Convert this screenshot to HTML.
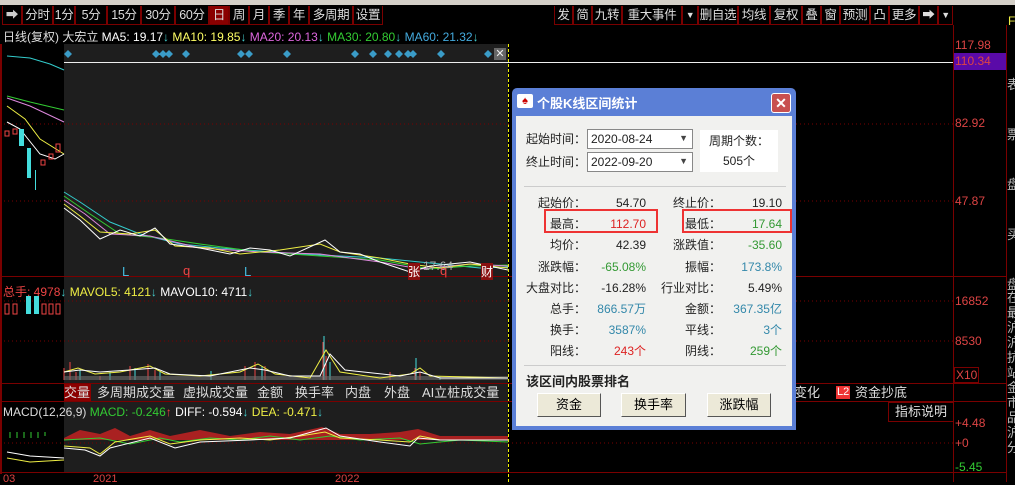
<!DOCTYPE html>
<html><head><meta charset="utf-8"><style>
*{margin:0;padding:0;box-sizing:border-box}
body{width:1015px;height:482px;background:#000;position:relative;overflow:hidden;font-family:"Liberation Sans","Noto Sans CJK SC",sans-serif;font-size:12px;color:#ccc}
.a{position:absolute;white-space:nowrap}
.tb{position:absolute;top:6px;height:19px;border:1px solid #7a0000;border-top:none;color:#ddd;font-size:12.5px;line-height:18px;text-align:center;white-space:nowrap;overflow:hidden;letter-spacing:-0.3px}
.lbl{position:absolute;color:#d44;font-size:12px}
.dlg{position:absolute;left:512px;top:88px;width:284px;height:342px;background:#5b7fd6;border-radius:5px 5px 0 0}
.body{position:absolute;left:4px;top:28px;width:276px;height:310px;background:#f1f1ef}
.d{position:absolute;color:#222;font-size:12px;white-space:nowrap}
.r{text-align:right}
.btn{position:absolute;top:305px;height:24px;background:#ece9d8;border:1px solid #fff;border-right-color:#555;border-bottom-color:#555;font-size:13px;text-align:center;line-height:22px;color:#000}
</style></head><body>
<div class="a" style="left:0;top:0;width:1015px;height:5px;background:#d4d0c8"></div>
<!-- toolbar -->
<div class="tb" style="left:2px;width:20px;color:#ccc">➡</div>
<div class="tb" style="left:22px;width:31px">分时</div>
<div class="tb" style="left:53px;width:22px">1分</div>
<div class="tb" style="left:75px;width:32px">5分</div>
<div class="tb" style="left:107px;width:34px">15分</div>
<div class="tb" style="left:141px;width:34px">30分</div>
<div class="tb" style="left:175px;width:34px">60分</div>
<div class="tb" style="left:209px;width:20px;background:#8a0000">日</div>
<div class="tb" style="left:229px;width:20px">周</div>
<div class="tb" style="left:249px;width:20px">月</div>
<div class="tb" style="left:269px;width:20px">季</div>
<div class="tb" style="left:289px;width:20px">年</div>
<div class="tb" style="left:309px;width:44px">多周期</div>
<div class="tb" style="left:353px;width:30px">设置</div>
<div class="tb" style="left:554px;width:19px">发</div>
<div class="tb" style="left:573px;width:19px">简</div>
<div class="tb" style="left:592px;width:30px">九转</div>
<div class="tb" style="left:622px;width:60px">重大事件</div>
<div class="tb" style="left:682px;width:16px;font-size:9px">▼</div>
<div class="tb" style="left:698px;width:40px">删自选</div>
<div class="tb" style="left:738px;width:32px">均线</div>
<div class="tb" style="left:770px;width:32px">复权</div>
<div class="tb" style="left:802px;width:19px">叠</div>
<div class="tb" style="left:821px;width:19px">窗</div>
<div class="tb" style="left:840px;width:30px">预测</div>
<div class="tb" style="left:870px;width:19px">凸</div>
<div class="tb" style="left:889px;width:30px">更多</div>
<div class="tb" style="left:919px;width:19px">➡</div>
<div class="tb" style="left:938px;width:15px;font-size:9px">▼</div>
<!-- info row -->
<div class="a" style="left:3px;top:28px;font-size:12px;color:#ddd">日线(复权) 大宏立 <span style="color:#fff">MA5: 19.17</span><span style="color:#4cc;font-weight:bold">↓</span> <span style="color:#ff6">MA10: 19.85</span><span style="color:#4cc;font-weight:bold">↓</span> <span style="color:#d6d">MA20: 20.13</span><span style="color:#4cc;font-weight:bold">↓</span> <span style="color:#3c3">MA30: 20.80</span><span style="color:#4cc;font-weight:bold">↓</span> <span style="color:#4ad">MA60: 21.32</span><span style="color:#4cc;font-weight:bold">↓</span></div>
<!-- chart frame -->
<div class="a" style="left:0;top:44px;width:3px;height:430px;border-left:2px solid #7a0000"></div>
<div class="a" style="left:64px;top:44px;width:444px;height:428px;background:#1e1e1e"></div>
<div class="a" style="left:508px;top:44px;height:438px;border-left:1px dashed #ee0"></div>
<div class="a" style="left:953px;top:25px;width:1px;height:457px;background:#7a0000"></div>
<div class="a" style="left:1006px;top:25px;width:1px;height:457px;background:#7a0000"></div>
<div class="a" style="left:64px;top:62px;width:889px;height:1px;background:#eee"></div>
<div class="a" style="left:0;top:276px;width:1006px;height:1px;background:#7a0000"></div>
<div class="a" style="left:0;top:383px;width:1006px;height:1px;background:#7a0000"></div>
<div class="a" style="left:0;top:401px;width:1006px;height:1px;background:#7a0000"></div>
<div class="a" style="left:0;top:472px;width:1006px;height:1px;background:#7a0000"></div>
<div class="a" style="left:494px;top:48px;width:12px;height:12px;background:#666;color:#eee;font-size:11px;line-height:12px;text-align:center">✕</div>
<svg class="a" style="left:0;top:44px" width="953" height="430">
<g fill="#3a9cc8">
<path d="M68 6l4 4-4 4-4-4z M156 6l4 4-4 4-4-4z M163 6l4 4-4 4-4-4z M169 6l4 4-4 4-4-4z M186 6l4 4-4 4-4-4z M241 6l4 4-4 4-4-4z M249 6l4 4-4 4-4-4z M287 6l4 4-4 4-4-4z M355 6l4 4-4 4-4-4z M373 6l4 4-4 4-4-4z M388 6l4 4-4 4-4-4z M399 6l4 4-4 4-4-4z M408 6l4 4-4 4-4-4z M413 6l4 4-4 4-4-4z M441 6l4 4-4 4-4-4z M488 6l4 4-4 4-4-4z"/>
</g>
<g stroke="#7a0000" stroke-dasharray="1,3"><line x1="0" y1="80" x2="953" y2="80"/><line x1="0" y1="157" x2="953" y2="157"/><line x1="0" y1="257" x2="953" y2="257"/><line x1="0" y1="297" x2="953" y2="297"/><line x1="0" y1="399" x2="953" y2="399"/></g>
<g fill="none" stroke-width="1">
<polyline stroke="#3cc" points="7,12 30,14 50,20 64,26"/>
<polyline stroke="#3c3" points="7,52 30,58 64,66"/>
<polyline stroke="#d8d" points="7,54 30,62 64,78"/>
<polyline stroke="#ee4" points="7,62 25,75 40,95 64,110"/>
<polyline stroke="#fff" points="7,78 20,85 40,110 55,115 64,110"/>
<polyline stroke="#3cc" points="64,148 80,158 110,178 140,190 180,200 220,204 300,210 380,214 440,220 480,224 508,223"/>
<polyline stroke="#3c3" points="64,152 90,170 120,190 160,194 200,200 260,208 320,212 380,216 430,225 470,222 508,221"/>
<polyline stroke="#d8d" points="64,156 85,170 110,190 150,192 200,204 260,208 320,210 380,218 420,225 470,220 508,222"/>
<polyline stroke="#ee4" points="64,160 80,172 100,188 130,190 155,186 175,202 210,204 240,210 280,206 320,200 340,208 380,214 410,220 440,224 470,220 508,224"/>
<polyline stroke="#fff" points="64,164 80,176 100,195 120,186 140,192 155,184 170,200 200,204 230,210 250,204 270,206 290,212 325,196 340,208 360,210 380,218 410,228 430,222 470,218 508,226"/>
</g>
<g fill="#4dd"><rect x="19" y="85" width="5" height="17"/><rect x="27" y="104" width="4" height="30"/><rect x="35" y="126" width="1" height="20"/></g>
<g fill="none" stroke="#e44"><rect x="5" y="87" width="4" height="5"/><rect x="13" y="85" width="4" height="5"/><rect x="41" y="116" width="4" height="5"/><rect x="49" y="110" width="4" height="5"/><rect x="56" y="100" width="4" height="8"/></g>
</svg>
<div class="a" style="left:122px;top:264px;color:#4bd;font-size:13px">L</div>
<div class="a" style="left:183px;top:263px;color:#e44;font-size:13px">q</div>
<div class="a" style="left:244px;top:264px;color:#4bd;font-size:13px">L</div>
<div class="a" style="left:408px;top:263px;color:#fff;background:#8a1010;font-size:12px">张</div>
<div class="a" style="left:423px;top:259px;color:#aaa;font-size:12px">17.64</div>
<div class="a" style="left:440px;top:263px;color:#e44;font-size:13px">q</div>
<div class="a" style="left:481px;top:263px;color:#fff;background:#8a1010;font-size:12px">财</div>
<!-- volume -->
<div class="a" style="left:3px;top:283px;font-size:12px"><span style="color:#e44">总手: 4978</span><span style="color:#4cc;font-weight:bold">↓</span> <span style="color:#ee4">MAVOL5: 4121</span><span style="color:#4cc;font-weight:bold">↓</span> <span style="color:#fff">MAVOL10: 4711</span><span style="color:#4cc;font-weight:bold">↓</span></div>
<svg class="a" style="left:0;top:292px" width="508" height="91">
<g fill="#4dd"><rect x="26" y="4" width="5" height="18"/><rect x="34" y="4" width="5" height="18"/></g>
<g fill="none" stroke="#e44"><rect x="5" y="12" width="4" height="10"/><rect x="13" y="12" width="4" height="10"/><rect x="42" y="12" width="4" height="10"/><rect x="49" y="12" width="4" height="10"/><rect x="56" y="12" width="4" height="10"/></g>
<path d="M64 88 V76 M70 88V70 M76 88V80 M100 88V84 M130 88V74 M148 88V72 M155 88V78 M245 88V74 M255 88V70 M265 88V74 M323 88V50 M326 88V64 M390 88V80 M415 88V76 M420 88V80" stroke="#e44"/>
<path d="M80 88V78 M110 88V80 M135 88V76 M160 88V80 M211 88V79 M262 88V74 M324 88V44 M330 88V70 M416 88V66 M440 88V84" stroke="#4dd"/>
<rect x="64" y="84" width="444" height="4" fill="#6a6a6a" opacity=".6"/>
<polyline fill="none" stroke="#ee4" points="64,80 78,76 95,82 120,80 150,74 165,82 200,84 240,80 258,72 275,82 310,86 326,58 340,80 380,86 410,82 420,76 430,84 508,86"/>
<polyline fill="none" stroke="#fff" points="64,80 80,78 100,80 130,78 155,76 170,82 210,84 250,76 265,78 290,84 320,84 330,62 345,78 400,84 420,80 440,86 508,86"/>
</svg>
<!-- tabs -->
<div class="a" style="left:0;top:384px;width:1006px;height:17px;font-size:13px;color:#ddd;line-height:17px">
<span class="a" style="left:64px;width:27px;background:#8a0000;height:17px">交量</span>
<span class="a" style="left:97px">多周期成交量</span>
<span class="a" style="left:183px">虚拟成交量</span>
<span class="a" style="left:257px">金额</span>
<span class="a" style="left:295px">换手率</span>
<span class="a" style="left:345px">内盘</span>
<span class="a" style="left:384px">外盘</span>
<span class="a" style="left:422px">AI立桩成交量</span>
<span class="a" style="left:794px">变化</span>
<span class="a" style="left:836px;background:#e33;color:#fff;font-size:11px;top:2px;line-height:13px;padding:0 1px">L2</span>
<span class="a" style="left:855px">资金抄底</span>
</div>
<div class="a" style="left:888px;top:402px;width:66px;height:20px;border:1px solid #7a0000;color:#ddd;font-size:13px;text-align:center;line-height:18px">指标说明</div>
<!-- macd -->
<div class="a" style="left:3px;top:405px;font-size:12px"><span style="color:#ddd">MACD(12,26,9)</span> <span style="color:#3c3">MACD: -0.246</span><span style="color:#e44;font-weight:bold">↑</span> <span style="color:#fff">DIFF: -0.594</span><span style="color:#4cc;font-weight:bold">↓</span> <span style="color:#ee4">DEA: -0.471</span><span style="color:#4cc;font-weight:bold">↓</span></div>
<svg class="a" style="left:0;top:418px" width="508" height="54">
<path d="M10 14V20 M17 14V20 M24 14V20 M31 14V20 M38 14V20 M45 14V18" stroke="#3c3"/>
<path d="M64 20 L80 12 L100 16 L115 10 L130 18 L150 12 L170 18 L200 12 L230 18 L260 14 L290 16 L322 9 L340 16 L370 16 L400 14 L418 11 L440 18 L508 18 L508 22 L64 22Z" fill="#c22" opacity=".8"/>
<polyline fill="none" stroke="#3c3" points="64,22 100,20 130,26 160,20 180,24 210,20 240,22 270,18 300,22 330,18 360,22 400,20 420,26 460,22 508,24"/>
<polyline fill="none" stroke="#fff" points="7,34 30,38 64,40"/>
<polyline fill="none" stroke="#ee4" points="7,40 30,44 64,42"/>
<polyline fill="none" stroke="#ee4" points="64,28 90,30 100,36 115,24 150,18 170,26 200,22 240,20 270,22 300,18 325,14 340,20 380,22 410,24 420,18 440,22 508,22"/>
<polyline fill="none" stroke="#fff" points="64,30 85,32 100,38 110,30 150,20 175,30 200,24 250,22 290,20 326,10 340,18 380,24 410,28 418,20 440,22 508,22"/>
</svg>
<div class="a" style="left:3px;top:473px;color:#d44;font-size:11px">03</div>
<div class="a" style="left:93px;top:473px;color:#d44;font-size:11px">2021</div>
<div class="a" style="left:335px;top:473px;color:#d44;font-size:11px">2022</div>
<!-- axis labels -->
<div class="lbl a" style="left:955px;top:38px">117.98</div>
<div class="lbl a" style="left:954px;top:53px;width:52px;height:17px;background:#5a0aa8;line-height:17px;padding-left:1px">110.34</div>
<div class="lbl a" style="left:955px;top:116px">82.92</div>
<div class="lbl a" style="left:955px;top:194px">47.87</div>
<div class="lbl a" style="left:955px;top:294px">16852</div>
<div class="lbl a" style="left:955px;top:334px">8530</div>
<div class="lbl a" style="left:954px;top:367px;border:1px solid #7a0000;padding:0 1px">X10</div>
<div class="lbl a" style="left:955px;top:416px">+4.48</div>
<div class="lbl a" style="left:955px;top:436px">+0</div>
<div class="lbl a" style="left:955px;top:460px;color:#3c3">-5.45</div>
<div class="a" style="left:1008px;top:14px;color:#ee4;font-size:12px">F</div>
<div class="a" style="left:1007px;top:60px;color:#bbb;font-size:13px;line-height:50px;width:10px;overflow:hidden;white-space:normal">表<br>票<br>盘<br>买<br>盘</div>
<div class="a" style="left:1007px;top:290px;color:#bbb;font-size:13px;line-height:15px;width:10px;overflow:hidden;white-space:normal">在<br>最<br>沪<br>沪<br>抗<br>站<br>金<br>市<br>品<br>沪<br>分</div>
<!-- dialog -->
<div class="dlg">
<div class="a" style="left:5px;top:6px;width:16px;height:14px;background:#fff;border-radius:2px;color:#c00;font-size:11px;line-height:14px;text-align:center">♠</div>
<div class="a" style="left:25px;top:5px;color:#fff;font-size:13px;font-weight:bold">个股K线区间统计</div>
<div class="a" style="left:259px;top:5px;width:20px;height:20px;background:#c85050;border:1px solid #fff;border-radius:3px;color:#fff;text-align:center;line-height:18px;font-size:14px;font-weight:bold">✕</div>
<div class="body">
<div class="d" style="left:10px;top:14px">起始时间：</div>
<div class="d" style="left:71px;top:13px;width:106px;height:20px;background:#fff;border:1px solid #888;padding:2px 3px">2020-08-24<span style="position:absolute;right:4px;top:3px;font-size:9px;color:#444">▼</span></div>
<div class="d" style="left:10px;top:37px">终止时间：</div>
<div class="d" style="left:71px;top:36px;width:106px;height:20px;background:#fff;border:1px solid #888;padding:2px 3px">2022-09-20<span style="position:absolute;right:4px;top:3px;font-size:9px;color:#444">▼</span></div>
<div class="d" style="left:184px;top:14px;width:78px;height:42px;background:#fff;text-align:center;line-height:20px;padding-top:1px">周期个数：<br>505个</div>
<div class="a" style="left:8px;top:70px;width:262px;height:1px;background:#ccc"></div>
<div class="d r" style="left:0;top:77px;width:70px;line-height:21.2px">起始价：<br>最高：<br>均价：<br>涨跌幅：<br>大盘对比：<br>总手：<br>换手：<br>阳线：</div>
<div class="d r" style="left:60px;top:77px;width:70px;line-height:21.2px">54.70<br><span style="color:#d22">112.70</span><br>42.39<br><span style="color:#393">-65.08%</span><br>-16.28%<br><span style="color:#38a">866.57万</span><br><span style="color:#38a">3587%</span><br><span style="color:#d22">243个</span></div>
<div class="d r" style="left:130px;top:77px;width:75px;line-height:21.2px">终止价：<br>最低：<br>涨跌值：<br>振幅：<br>行业对比：<br>金额：<br>平线：<br>阴线：</div>
<div class="d r" style="left:196px;top:77px;width:70px;line-height:21.2px">19.10<br><span style="color:#393">17.64</span><br><span style="color:#393">-35.60</span><br><span style="color:#38a">173.8%</span><br>5.49%<br><span style="color:#38a">367.35亿</span><br><span style="color:#38a">3个</span><br><span style="color:#393">259个</span></div>
<div class="a" style="left:28px;top:93px;width:114px;height:24px;border:2px solid #e33"></div>
<div class="a" style="left:166px;top:93px;width:110px;height:24px;border:2px solid #e33"></div>
<div class="a" style="left:8px;top:249px;width:262px;height:1px;background:#ccc"></div>
<div class="d" style="left:10px;top:255px;font-weight:bold;font-size:13px">该区间内股票排名</div>
</div>
<div class="btn" style="left:25px;width:64px">资金</div>
<div class="btn" style="left:109px;width:65px">换手率</div>
<div class="btn" style="left:195px;width:64px">涨跌幅</div>
</div>
</body></html>
